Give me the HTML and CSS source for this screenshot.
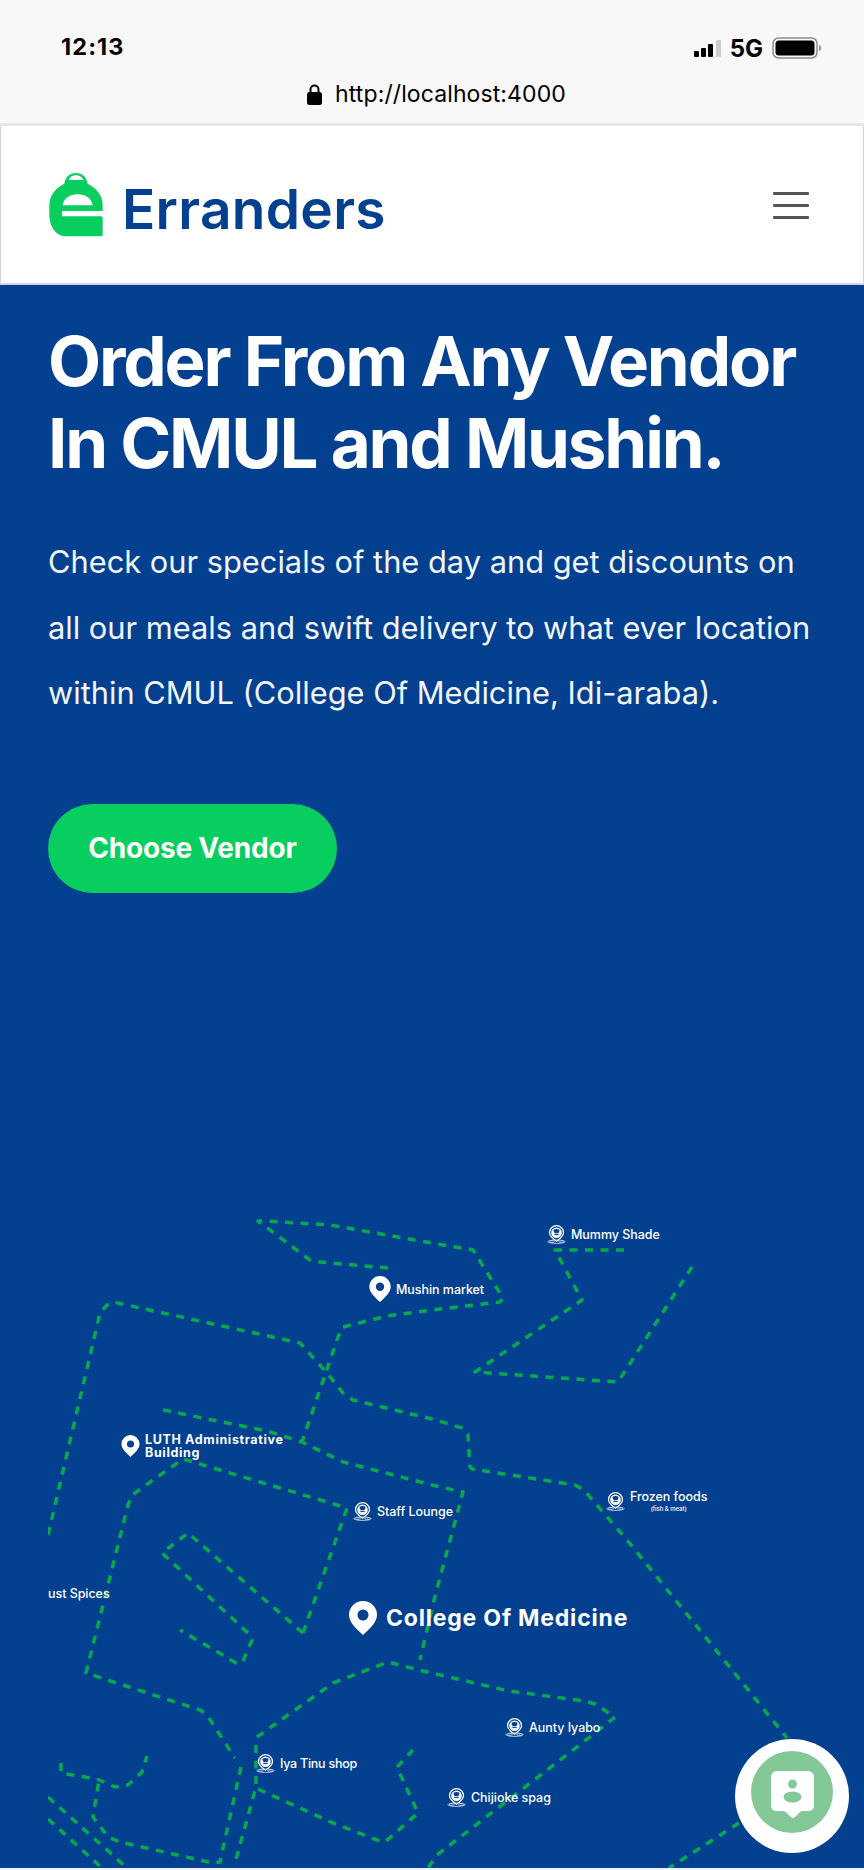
FILE: index.html
```html
<!DOCTYPE html>
<html lang="en">
<head>
<meta charset="utf-8">
<title>Erranders</title>
<link rel="stylesheet" href="styles.css">
</head>
<body>
<svg class="defs" width="0" height="0" aria-hidden="true">
  <symbol id="chef" viewBox="0 0 19 19">
    <path d="M9.5 .7a7 7 0 0 1 7 7c0 3.6-4.5 6.7-7 8.6-2.500-1.900-7-5-7-8.600a7 7 0 0 1 7-7z" fill="none" stroke="#fff" stroke-width="1.200"/>
    <circle cx="9.500" cy="7.700" r="5.300" fill="#fff"/>
    <path d="M6.500 5.500a1.600 1.600 0 0 1 2-1.200 1.500 1.500 0 0 1 2 0 1.600 1.600 0 0 1 2 1.200c0 1-.6 1.300-.8 1.600v1.200H7.300V7.100c-.2-.3-.8-.6-.8-1.600z" fill="#03408f"/>
    <path d="M7.300 9.600h4.400" stroke="#03408f" stroke-width="1"/>
    <ellipse cx="9.500" cy="16.700" rx="8.700" ry="1.700" fill="none" stroke="#fff" stroke-width=".7"/>
    <ellipse cx="5" cy="16.700" rx="2.500" ry=".8" fill="none" stroke="#fff" stroke-width=".5"/>
    <ellipse cx="14" cy="16.700" rx="2.500" ry=".8" fill="none" stroke="#fff" stroke-width=".5"/>
  </symbol>
  <symbol id="pin" viewBox="0 0 28 34">
    <path fill-rule="evenodd" d="M14 0a14 14 0 0 1 14 14c0 7.500-8 14.500-14 20C8 28.500 0 21.500 0 14A14 14 0 0 1 14 0zm0 8.500a5.500 5.500 0 1 0 0 11 5.500 5.500 0 0 0 0-11z" fill="#fff"/>
  </symbol>
</svg>

<div class="chrome">
  <div class="status">
    <span class="time">12:13</span>
    <div class="indicators">
      <svg class="signal" viewBox="0 0 27 17" width="27" height="17">
        <rect x="0" y="11" width="5" height="6" rx="1" fill="#000"/>
        <rect x="7" y="8" width="5" height="9" rx="1" fill="#000"/>
        <rect x="14" y="4" width="5" height="13" rx="1" fill="#000"/>
        <rect x="22" y="0" width="5" height="17" rx="1" fill="#ccc"/>
      </svg>
      <span class="net">5G</span>
      <svg class="battery" viewBox="0 0 49 22" width="49" height="22">
        <rect x="1" y="1" width="44" height="20" rx="5.500" fill="none" stroke="#8c8c8c" stroke-width="1.500"/>
        <rect x="3.500" y="3.500" width="39" height="15" rx="3.500" fill="#000"/>
        <path d="M47 8c1.300.4 2 1.500 2 3s-.7 2.600-2 3z" fill="#8c8c8c"/>
      </svg>
    </div>
  </div>
  <div class="url">
    <svg class="lock" viewBox="0 0 15 21" width="15" height="21">
      <path d="M3.500 9V5.500a4 4 0 0 1 8 0V9" fill="none" stroke="#000" stroke-width="2"/>
      <rect x="0" y="8" width="15" height="13" rx="2.500" fill="#000"/>
    </svg>
    <span>http://localhost:4000</span>
  </div>
</div>

<header class="topbar">
  <a class="brand">
    <svg class="brand-icon" viewBox="60 68 160 192" width="54" height="64">
      <path fill-rule="evenodd" d="M105 100C108 80 122 68 140 68s32 12 35 32C203 115 220 135 220 165v17H98v16h117q5 0 5 5v50q0 5-5 5H112C80 258 60 230 60 190v-25C60 135 77 115 105 100zM118 89c3-9 12-14 22-14s19 5 23 14zM100 165c3-20 20-33 45-33s42 13 45 33z" fill="#08ce60"/>
    </svg>
    <span class="brand-name">Erranders</span>
  </a>
  <button class="menu" aria-label="Menu"><i></i><i></i><i></i></button>
</header>

<main class="hero">
  <h1>Order From Any Vendor<br>In CMUL and Mushin.</h1>
  <p class="lead">Check our specials of the day and get discounts on all our meals and swift delivery to what ever location within CMUL (College Of Medicine, Idi-araba).</p>
  <a class="cta">Choose Vendor</a>

  <section class="map">
    <svg class="routes" viewBox="48 1200 816 668" width="816" height="668" fill="none">
      <path d="M388 1268L320 1262 310 1260 258 1221 267 1221 330 1225 432 1243 473 1250 503 1298 500 1302 432 1310 387 1316 343 1327 338 1337 302 1442"/>
      <path d="M48 1535L100 1313 107 1305 113 1302 300 1343 327 1373 343 1393 353 1400 432 1419 462 1428 468 1435 470 1467 472 1469 575 1485 584 1490 627 1540 787 1738"/>
      <path d="M739 1823L669 1868"/>
      <path d="M163 1410L267 1431 302 1442 343 1462 432 1485 454 1490 463 1492 434 1600 420 1660"/>
      <path d="M257 1737L333 1683 388 1662 423 1671 509 1691 585 1701 595 1704 615 1717 595 1733 437 1855 428 1868"/>
      <path d="M303 1633L347 1508 183 1459 173 1466 132 1495 128 1505 86 1673 200 1710 207 1715 235 1758"/>
      <path d="M241 1767L220 1862 213 1863 120 1842 108 1837 93 1817 99 1780"/>
      <path d="M256 1745V1787L235 1863"/>
      <path d="M258 1789L333 1823 377 1840 385 1842 418 1813 397 1767 413 1750"/>
      <path d="M61 1763V1773L97 1779 115 1787 128 1785 142 1772 147 1756"/>
      <path d="M48 1797L127 1868"/>
      <path d="M48 1819L102 1868"/>
      <path d="M303 1633L188 1533 162 1553 248 1633 252 1640 243 1661 238 1664 180 1630"/>
      <path d="M624 1250H555L582 1300 475 1372 618 1382 692 1267"/>
    </svg>

    <div class="place mushin"><svg class="pin-sm"><use href="#pin"/></svg><span>Mushin market</span></div>
    <div class="place mummy"><svg class="chef"><use href="#chef"/></svg><span>Mummy Shade</span></div>
    <div class="place luth"><svg class="pin-sm"><use href="#pin"/></svg><span>LUTH Administrative<br>Building</span></div>
    <div class="place staff"><svg class="chef"><use href="#chef"/></svg><span>Staff Lounge</span></div>
    <div class="place frozen"><svg class="chef"><use href="#chef"/></svg><span class="stack">Frozen foods<small>(fish &amp; meat)</small></span></div>
    <div class="place spices"><span>ust Spices</span></div>
    <div class="place college"><svg class="pin-lg"><use href="#pin"/></svg><span>College Of Medicine</span></div>
    <div class="place aunty"><svg class="chef"><use href="#chef"/></svg><span>Aunty Iyabo</span></div>
    <div class="place iya"><svg class="chef"><use href="#chef"/></svg><span>Iya Tinu shop</span></div>
    <div class="place chijioke"><svg class="chef"><use href="#chef"/></svg><span>Chijioke spag</span></div>
  </section>

  <button class="chat" aria-label="Chat">
    <span class="chat-inner">
      <svg viewBox="0 0 43 47" width="43" height="47">
        <path d="M6 0h31a6 6 0 0 1 6 6v29a5 5 0 0 1-5 5h-6c-2 0-3 .8-5 3l-3 3c-1.300 1.300-3 1.300-4.300 0l-3-3c-2-2.200-3-3-5-3H5a5 5 0 0 1-5-5V6a6 6 0 0 1 6-6z" fill="#fff"/>
        <circle cx="21.500" cy="13" r="4.500" fill="#85c898"/>
        <ellipse cx="21.500" cy="26" rx="9" ry="5.500" fill="#85c898"/>
      </svg>
    </span>
  </button>
</main>
</body>
</html>
```
FILE: styles.css
```css
* { box-sizing: border-box; }
html, body { margin: 0; padding: 0; }
body {
  width: 864px;
  height: 1870px;
  display: flex;
  flex-direction: column;
  background: #f0f2f5;
  font-family: "Inter", "Liberation Sans", sans-serif;
  overflow: hidden;
}
.defs { position: absolute; }

.chrome {
  height: 126px;
  flex: none;
  background: #f8f8f8;
  border-bottom: 3px solid #e6e6e6;
  padding: 33px 43px 0 61px;
  color: #000;
}
.status {
  display: flex;
  justify-content: space-between;
  align-items: center;
  height: 26px;
}
.time { font-size: 23.500px; font-weight: 700; letter-spacing: 1.100px; }
.indicators { display: flex; align-items: center; gap: 9px; margin-top: 4px; }
.net { font-size: 24px; font-weight: 700; line-height: 22px; margin-top: 1px; }
.signal, .battery { display: block; }
.signal { margin-left: -1px; }
.url {
  display: flex;
  justify-content: center;
  align-items: center;
  gap: 13px;
  margin-top: 21px;
  font-size: 23px;
  letter-spacing: .1px;
  line-height: 28px;
  padding-left: 9px;
  margin-left: -61px;
  margin-right: -43px;
}
.lock { display: block; }

.topbar {
  height: 159px;
  flex: none;
  background: #fff;
  border: 1px solid #d4d4d4;
  border-top: 0;
  border-bottom-width: 2px;
  display: flex;
  justify-content: space-between;
  align-items: center;
  padding: 0 54px 0 48px;
}
.brand { display: flex; align-items: center; gap: 19px; }
.brand-icon { display: block; margin-top: 0; }
.brand-name {
  font-size: 55px;
  font-weight: 600;
  color: #03408f;
  letter-spacing: .3px;
  line-height: 64px;
  margin-top: 8px;
}
.menu {
  display: flex;
  flex-direction: column;
  gap: 8.500px;
  width: 36px;
  padding: 0;
  border: 0;
  background: none;
  margin-top: 2px;
}
.menu i { display: block; height: 3.500px; background: #555; border-radius: 1px; }

.hero {
  position: relative;
  flex: none;
  height: 1583px;
  background: #03408f;
  color: #fff;
  padding: 35px 0 0 48px;
  display: flex;
  flex-direction: column;
  align-items: flex-start;
}
h1 {
  margin: 0;
  font-size: 69px;
  line-height: 82px;
  font-weight: 700;
  letter-spacing: -2.150px;
  white-space: nowrap;
}
.lead {
  margin: 45px 0 0;
  width: 775px;
  font-size: 30.800px;
  line-height: 65.500px;
  color: #f2f5fa;
}
.cta {
  margin-top: 78px;
  width: 289px;
  height: 89px;
  border-radius: 45px;
  background: #08ce60;
  font-size: 28px;
  font-weight: 700;
  display: flex;
  align-items: center;
  justify-content: center;
  letter-spacing: -.2px;
}

.map {
  position: relative;
  margin-top: auto;
  width: 816px;
  height: 668px;
  overflow: hidden;
  flex: none;
}
.routes {
  position: absolute;
  left: 0;
  top: 0;
}
.routes path {
  stroke: #07a94f;
  stroke-width: 3.500;
  stroke-dasharray: 8 7.500;
  stroke-linejoin: round;
}

.place {
  position: absolute;
  display: flex;
  align-items: center;
  gap: 5px;
  font-size: 12.500px;
  font-weight: 500;
  white-space: nowrap;
  line-height: 13px;
  color: #fff;
  letter-spacing: -.05px;
}
.chef { width: 19px; height: 19px; flex: none; }
.pin-sm { width: 22px; height: 26px; flex: none; }
.pin-lg { width: 28px; height: 34px; flex: none; }
.stack { display: flex; flex-direction: column; align-items: center; }
.stack small { font-size: 6px; line-height: 8px; margin-top: 2px; }

.mushin { left: 321px; top: 76px; }
.mummy { left: 499px; top: 25px; }
.luth { left: 73px; top: 233px; font-weight: 700; letter-spacing: .65px; }
.luth .pin-sm { width: 19px; height: 22px; }
.staff { left: 305px; top: 302px; }
.frozen { left: 558px; top: 290px; align-items: flex-start; }
.frozen .chef { margin-top: 2px; }
.spices { left: 0; top: 387px; }
.college { left: 301px; top: 401px; font-size: 23px; font-weight: 700; gap: 9px; letter-spacing: .8px; line-height: 34px; }
.aunty { left: 457px; top: 518px; }
.iya { left: 208px; top: 554px; letter-spacing: -.25px; }
.chijioke { left: 399px; top: 588px; }

.chat {
  position: absolute;
  left: 735px;
  top: 1454px;
  width: 114px;
  height: 114px;
  border: 0;
  padding: 0;
  border-radius: 50%;
  background: #fff;
}
.chat-inner {
  position: absolute;
  left: 16px;
  top: 12px;
  width: 82px;
  height: 82px;
  border-radius: 50%;
  background: #85c898;
  display: flex;
  align-items: center;
  justify-content: center;
}
.chat-inner svg { display: block; margin-top: 4px; }
```
